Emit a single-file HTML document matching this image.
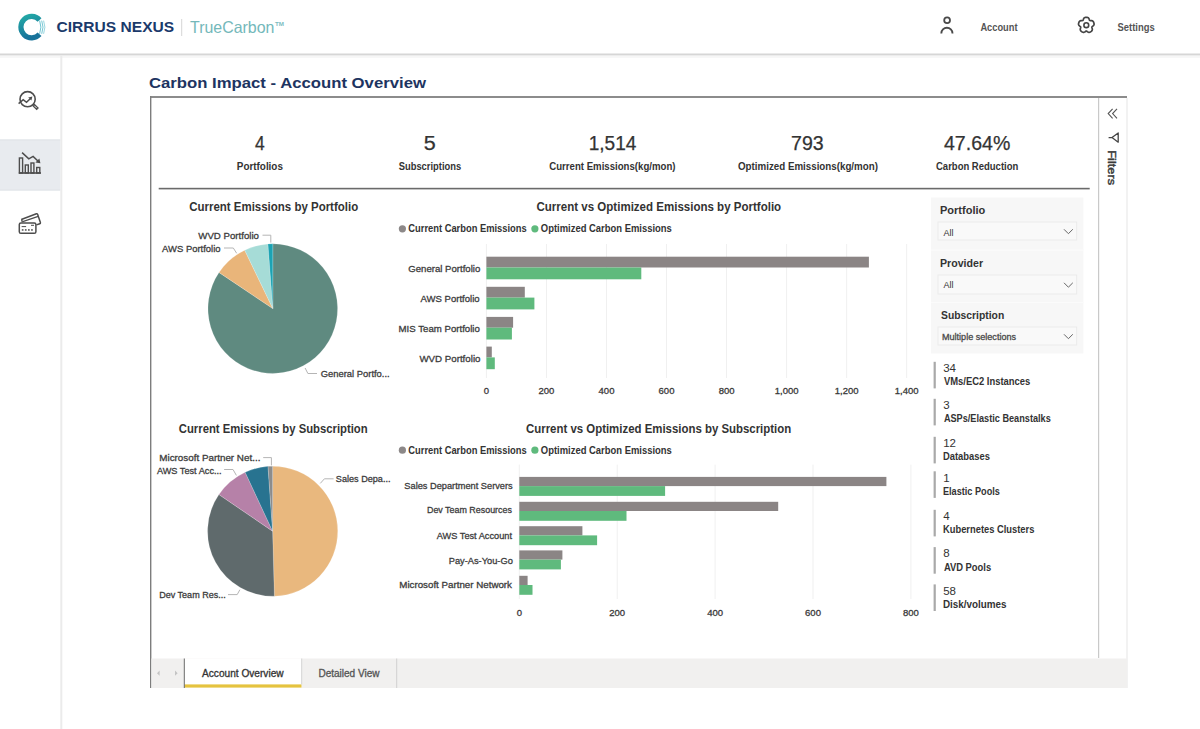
<!DOCTYPE html>
<html><head><meta charset="utf-8"><title>Carbon Impact - Account Overview</title>
<style>html,body{margin:0;padding:0;background:#fff;overflow:hidden} svg{display:block} text{font-family:"Liberation Sans", sans-serif}</style>
</head><body>
<svg width="1200" height="729" viewBox="0 0 1200 729">
<rect x="0" y="0" width="1200" height="54" fill="#ffffff"/>
<rect x="0" y="53.5" width="1200" height="1.5" fill="#d6d6d6"/>
<rect x="0" y="55" width="1200" height="1.5" fill="#ececec"/>
<rect x="0" y="56.5" width="1200" height="1.5" fill="#f7f7f7"/>
<defs><linearGradient id="lg" x1="0" y1="0" x2="0.3" y2="1"><stop offset="0" stop-color="#23a9a6"/><stop offset="1" stop-color="#17739a"/></linearGradient></defs>
<path d="M39.55 34.26 A10.7 10.7 0 1 1 39.55 19.94" fill="none" stroke="url(#lg)" stroke-width="5.2"/>
<path d="M39.6 20.6 Q42.2 27.2 39.6 33.8" fill="none" stroke="#3fb0c2" stroke-opacity="0.85" stroke-width="0.9"/>
<path d="M41.7 20.6 Q44.3 27.2 41.7 33.8" fill="none" stroke="#3fb0c2" stroke-opacity="0.8" stroke-width="0.9"/>
<path d="M43.6 20.6 Q46.2 27.2 43.6 33.8" fill="none" stroke="#3fb0c2" stroke-opacity="0.6" stroke-width="0.9"/>
<rect x="181.2" y="19" width="1" height="17" fill="#d5d5d5"/>
<text x="275" y="25.5" font-family="Liberation Sans" font-size="6" font-weight="700" fill="#7bbcbf" textLength="9" lengthAdjust="spacingAndGlyphs">TM</text>
<circle cx="947.1" cy="20.2" r="2.9" fill="none" stroke="#4a4a4a" stroke-width="1.8"/>
<path d="M941.3 33.4 A5.6 5.6 0 0 1 952.5 33.4" fill="none" stroke="#4a4a4a" stroke-width="1.9"/>
<path d="M1093.76 25.20 L1093.35 25.69 L1092.84 26.12 L1092.35 26.49 L1092.00 26.84 L1091.88 27.23 L1091.95 27.71 L1092.13 28.30 L1092.29 28.95 L1092.34 29.59 L1092.22 30.17 L1091.95 30.66 L1091.58 31.07 L1091.16 31.43 L1090.72 31.75 L1090.25 32.04 L1089.74 32.26 L1089.19 32.36 L1088.61 32.30 L1088.01 32.06 L1087.45 31.70 L1086.95 31.35 L1086.51 31.13 L1086.09 31.13 L1085.65 31.35 L1085.15 31.70 L1084.59 32.06 L1083.99 32.30 L1083.41 32.36 L1082.86 32.26 L1082.35 32.04 L1081.88 31.75 L1081.44 31.43 L1081.02 31.07 L1080.65 30.66 L1080.38 30.17 L1080.26 29.59 L1080.31 28.95 L1080.47 28.30 L1080.65 27.71 L1080.72 27.23 L1080.60 26.84 L1080.25 26.49 L1079.76 26.12 L1079.25 25.69 L1078.84 25.20 L1078.59 24.66 L1078.52 24.11 L1078.58 23.56 L1078.71 23.02 L1078.88 22.50 L1079.09 21.99 L1079.36 21.51 L1079.75 21.11 L1080.26 20.81 L1080.89 20.66 L1081.55 20.61 L1082.16 20.61 L1082.65 20.52 L1082.98 20.28 L1083.21 19.85 L1083.41 19.27 L1083.65 18.65 L1083.99 18.10 L1084.43 17.70 L1084.94 17.46 L1085.47 17.35 L1086.02 17.30 L1086.58 17.30 L1087.13 17.35 L1087.66 17.46 L1088.17 17.70 L1088.61 18.10 L1088.95 18.65 L1089.19 19.27 L1089.39 19.85 L1089.62 20.28 L1089.95 20.52 L1090.44 20.61 L1091.05 20.61 L1091.71 20.66 L1092.34 20.81 L1092.85 21.11 L1093.24 21.51 L1093.51 21.99 L1093.72 22.50 L1093.89 23.02 L1094.02 23.56 L1094.08 24.11 L1094.01 24.66 L1093.76 25.20Z" fill="none" stroke="#444" stroke-width="1.7" stroke-linejoin="round"/>
<circle cx="1086.3" cy="25.2" r="2.4" fill="none" stroke="#444" stroke-width="1.6"/>
<rect x="60.3" y="55" width="2" height="674" fill="#ebebeb"/>
<rect x="0" y="139.5" width="60.3" height="51" fill="#e8ebef"/>
<rect x="0" y="139.5" width="60.3" height="1" fill="#e0e3e7"/>
<rect x="0" y="189.5" width="60.3" height="1" fill="#e0e3e7"/>
<circle cx="27.6" cy="99.2" r="7.6" fill="none" stroke="#4d4d4d" stroke-width="1.6"/>
<path d="M33.2 104.6 L37.8 109.2" stroke="#4d4d4d" stroke-width="3.2" stroke-linecap="butt"/>
<path d="M34.3 105.7 L36.7 108.1" stroke="#fff" stroke-width="0.9"/>
<path d="M18.6 103.6 L23.2 99.7 L26.5 102.3 L30.2 98.8" fill="none" stroke="#4d4d4d" stroke-width="1.5"/>
<path d="M28.2 97.4 L32.4 96.4 L31.4 100.6 Z" fill="#4d4d4d"/>
<path d="M18.8 173 L41 173" stroke="#4d4d4d" stroke-width="1.6"/>
<rect x="19.4" y="158" width="3.200000000000003" height="15" fill="none" stroke="#4d4d4d" stroke-width="1.4"/>
<rect x="25.3" y="165" width="3.0" height="8" fill="none" stroke="#4d4d4d" stroke-width="1.4"/>
<rect x="31" y="163" width="2.8999999999999986" height="10" fill="none" stroke="#4d4d4d" stroke-width="1.4"/>
<rect x="36.7" y="167.5" width="3.0999999999999943" height="5.5" fill="none" stroke="#4d4d4d" stroke-width="1.4"/>
<path d="M22.1 152.6 L28.8 158.8 L33.1 156.4 L38.2 161.2" fill="none" stroke="#4d4d4d" stroke-width="1.5"/>
<path d="M35.4 162.4 L40.4 163.2 L39.4 158.4 Z" fill="#4d4d4d"/>
<path d="M21.3 219.5 L36.4 213.8 Q37.2 213.5 37.6 214.3 L40.4 222.6 Q40.6 223.4 39.8 223.7 L36.4 224.9" fill="none" stroke="#4d4d4d" stroke-width="1.5" stroke-linejoin="round"/>
<path d="M21.6 219.4 L22.4 222.4" stroke="#4d4d4d" stroke-width="1.4"/>
<path d="M22.8 221.6 L38.2 216.4" stroke="#4d4d4d" stroke-width="1.2"/>
<rect x="19.3" y="222.9" width="16.6" height="10.4" rx="1.6" fill="#fff" stroke="#4d4d4d" stroke-width="1.5"/>
<rect x="21.6" y="226.1" width="4.5" height="1" fill="#4d4d4d"/>
<rect x="31" y="224.8" width="3" height="1" fill="#4d4d4d"/>
<rect x="21.8" y="229.2" width="1.7" height="1.5" fill="#4d4d4d"/>
<rect x="24.9" y="229.2" width="1.7" height="1.5" fill="#4d4d4d"/>
<rect x="28" y="229.2" width="1.7" height="1.5" fill="#4d4d4d"/>
<rect x="31.1" y="229.2" width="1.7" height="1.5" fill="#4d4d4d"/>
<rect x="150" y="96" width="977" height="592" fill="#ffffff"/>
<rect x="150" y="96" width="977" height="2" fill="#8c8c8c"/>
<rect x="150" y="96" width="1.4" height="592" fill="#7d7d7d"/>
<rect x="1126.5" y="98" width="1" height="590" fill="#e6e6e6"/>
<rect x="1098" y="98" width="1.2" height="560" fill="#c9c9c9"/>
<path d="M1112.6 108.8 L1108.2 113.6 L1112.6 118.4 M1117 108.8 L1112.6 113.6 L1117 118.4" fill="none" stroke="#555" stroke-width="1.1"/>
<path d="M1118.2 133 L1118.2 142.2 L1112 137.6 Z M1112 137.6 L1108.6 137.6" fill="none" stroke="#444" stroke-width="1.3" stroke-linejoin="round"/>
<text transform="translate(1108.4 150.2) rotate(90)" x="0" y="0" font-family="Liberation Sans" font-size="11.5" font-weight="400" fill="#3a3a3a" stroke="#3a3a3a" stroke-width="0.45" textLength="35" lengthAdjust="spacingAndGlyphs">Filters</text>
<rect x="158.7" y="187.8" width="931" height="1.6" fill="#6a6a6a"/>
<path d="M272.8 308.6 L272.80 243.80 A64.8 64.8 0 1 1 219.00 272.47 Z" fill="#5f8a80" stroke="#ffffff" stroke-width="0.5" stroke-opacity="0.35"/><path d="M272.8 308.6 L219.00 272.47 A64.8 64.8 0 0 1 244.72 250.20 Z" fill="#e9b57a" stroke="#ffffff" stroke-width="0.5" stroke-opacity="0.35"/><path d="M272.8 308.6 L244.72 250.20 A64.8 64.8 0 0 1 267.96 243.98 Z" fill="#a6dcd7" stroke="#ffffff" stroke-width="0.5" stroke-opacity="0.35"/><path d="M272.8 308.6 L267.96 243.98 A64.8 64.8 0 0 1 272.80 243.80 Z" fill="#1ba3b3" stroke="#ffffff" stroke-width="0.5" stroke-opacity="0.35"/>
<path d="M262.5 235.2 L270.8 235.2 L270.8 242.6" fill="none" stroke="#b5b5b5" stroke-width="1"/>
<path d="M224 248 L233.3 248 L236.7 253.3" fill="none" stroke="#b5b5b5" stroke-width="1"/>
<path d="M305.1 368 L307.9 373.5 L317 373.5" fill="none" stroke="#b5b5b5" stroke-width="1"/>
<path d="M272.6 531.2 L272.60 466.20 A65 65 0 0 1 274.35 596.18 Z" fill="#e9b87e" stroke="#ffffff" stroke-width="0.5" stroke-opacity="0.35"/><path d="M272.6 531.2 L274.35 596.18 A65 65 0 0 1 218.92 494.55 Z" fill="#5f6a6c" stroke="#ffffff" stroke-width="0.5" stroke-opacity="0.35"/><path d="M272.6 531.2 L218.92 494.55 A65 65 0 0 1 245.15 472.28 Z" fill="#b681a8" stroke="#ffffff" stroke-width="0.5" stroke-opacity="0.35"/><path d="M272.6 531.2 L245.15 472.28 A65 65 0 0 1 268.01 466.36 Z" fill="#287390" stroke="#ffffff" stroke-width="0.5" stroke-opacity="0.35"/><path d="M272.6 531.2 L268.01 466.36 A65 65 0 0 1 272.60 466.20 Z" fill="#8c8c8c" stroke="#ffffff" stroke-width="0.5" stroke-opacity="0.35"/>
<path d="M263.2 457.6 L271.4 457.6 L271.4 465.4" fill="none" stroke="#b5b5b5" stroke-width="1"/>
<path d="M224.1 469.5 L233 469.5 L236.4 475.4" fill="none" stroke="#b5b5b5" stroke-width="1"/>
<path d="M320.3 483.4 L324.4 478.8 L333.6 478.8" fill="none" stroke="#b5b5b5" stroke-width="1"/>
<path d="M228 594.6 L237.2 594.6 L239.9 589.7" fill="none" stroke="#b5b5b5" stroke-width="1"/>
<rect x="485.90" y="244" width="1" height="134" fill="#f0f0f0"/>
<rect x="545.94" y="244" width="1" height="134" fill="#f0f0f0"/>
<rect x="605.98" y="244" width="1" height="134" fill="#f0f0f0"/>
<rect x="666.02" y="244" width="1" height="134" fill="#f0f0f0"/>
<rect x="726.06" y="244" width="1" height="134" fill="#f0f0f0"/>
<rect x="786.10" y="244" width="1" height="134" fill="#f0f0f0"/>
<rect x="846.14" y="244" width="1" height="134" fill="#f0f0f0"/>
<rect x="906.18" y="244" width="1" height="134" fill="#f0f0f0"/>
<rect x="486.4" y="256.7" width="382.5" height="10.8" fill="#8b8585"/>
<rect x="486.4" y="267.5" width="154.9" height="11.8" fill="#5fba7d"/>
<rect x="486.4" y="286.8" width="38.4" height="10.8" fill="#8b8585"/>
<rect x="486.4" y="297.6" width="48.0" height="11.8" fill="#5fba7d"/>
<rect x="486.4" y="316.9" width="26.7" height="10.8" fill="#8b8585"/>
<rect x="486.4" y="327.7" width="25.5" height="11.8" fill="#5fba7d"/>
<rect x="486.4" y="346.6" width="5.4" height="10.8" fill="#8b8585"/>
<rect x="486.4" y="357.4" width="8.4" height="11.8" fill="#5fba7d"/>
<text x="486.4" y="393.5" text-anchor="middle" font-family="Liberation Sans" font-size="9.5" fill="#3a3a3a" stroke="#3a3a3a" stroke-width="0.3">0</text>
<text x="546.4" y="393.5" text-anchor="middle" font-family="Liberation Sans" font-size="9.5" fill="#3a3a3a" stroke="#3a3a3a" stroke-width="0.3">200</text>
<text x="606.5" y="393.5" text-anchor="middle" font-family="Liberation Sans" font-size="9.5" fill="#3a3a3a" stroke="#3a3a3a" stroke-width="0.3">400</text>
<text x="666.5" y="393.5" text-anchor="middle" font-family="Liberation Sans" font-size="9.5" fill="#3a3a3a" stroke="#3a3a3a" stroke-width="0.3">600</text>
<text x="726.6" y="393.5" text-anchor="middle" font-family="Liberation Sans" font-size="9.5" fill="#3a3a3a" stroke="#3a3a3a" stroke-width="0.3">800</text>
<text x="786.6" y="393.5" text-anchor="middle" font-family="Liberation Sans" font-size="9.5" fill="#3a3a3a" stroke="#3a3a3a" stroke-width="0.3">1,000</text>
<text x="846.6" y="393.5" text-anchor="middle" font-family="Liberation Sans" font-size="9.5" fill="#3a3a3a" stroke="#3a3a3a" stroke-width="0.3">1,200</text>
<text x="906.7" y="393.5" text-anchor="middle" font-family="Liberation Sans" font-size="9.5" fill="#3a3a3a" stroke="#3a3a3a" stroke-width="0.3">1,400</text>
<circle cx="402.4" cy="228.8" r="3.6" fill="#8c8888"/>
<circle cx="534.9" cy="228.8" r="3.6" fill="#5fba7d"/>
<circle cx="402.4" cy="450.2" r="3.6" fill="#8c8888"/>
<circle cx="534.9" cy="450.2" r="3.6" fill="#5fba7d"/>
<rect x="518.80" y="464.6" width="1" height="134.4" fill="#f0f0f0"/>
<rect x="616.70" y="464.6" width="1" height="134.4" fill="#f0f0f0"/>
<rect x="714.60" y="464.6" width="1" height="134.4" fill="#f0f0f0"/>
<rect x="812.50" y="464.6" width="1" height="134.4" fill="#f0f0f0"/>
<rect x="910.40" y="464.6" width="1" height="134.4" fill="#f0f0f0"/>
<rect x="519.3" y="476.9" width="367.1" height="9.2" fill="#8b8585"/>
<rect x="519.3" y="486.1" width="145.8" height="9.8" fill="#5fba7d"/>
<rect x="519.3" y="501.8" width="258.9" height="9.2" fill="#8b8585"/>
<rect x="519.3" y="511.0" width="107.2" height="9.8" fill="#5fba7d"/>
<rect x="519.3" y="526.2" width="63.1" height="9.2" fill="#8b8585"/>
<rect x="519.3" y="535.4" width="77.8" height="9.8" fill="#5fba7d"/>
<rect x="519.3" y="550.4" width="43.1" height="9.2" fill="#8b8585"/>
<rect x="519.3" y="559.6" width="41.6" height="9.8" fill="#5fba7d"/>
<rect x="519.3" y="575.8" width="8.3" height="9.2" fill="#8b8585"/>
<rect x="519.3" y="585.0" width="13.2" height="9.8" fill="#5fba7d"/>
<text x="519.3" y="615.6" text-anchor="middle" font-family="Liberation Sans" font-size="9.5" fill="#3a3a3a" stroke="#3a3a3a" stroke-width="0.3">0</text>
<text x="617.2" y="615.6" text-anchor="middle" font-family="Liberation Sans" font-size="9.5" fill="#3a3a3a" stroke="#3a3a3a" stroke-width="0.3">200</text>
<text x="715.1" y="615.6" text-anchor="middle" font-family="Liberation Sans" font-size="9.5" fill="#3a3a3a" stroke="#3a3a3a" stroke-width="0.3">400</text>
<text x="813.0" y="615.6" text-anchor="middle" font-family="Liberation Sans" font-size="9.5" fill="#3a3a3a" stroke="#3a3a3a" stroke-width="0.3">600</text>
<text x="910.9" y="615.6" text-anchor="middle" font-family="Liberation Sans" font-size="9.5" fill="#3a3a3a" stroke="#3a3a3a" stroke-width="0.3">800</text>
<rect x="931" y="197.5" width="152.4" height="156" fill="#f7f7f7"/>
<rect x="931" y="249.5" width="152.4" height="1.2" fill="#fbfbfb"/>
<rect x="931" y="301.8" width="152.4" height="1.2" fill="#fbfbfb"/>
<rect x="938" y="222" width="138.6" height="18" fill="#f9f9f9" stroke="#ebebeb" stroke-width="1"/>
<path d="M1064 229.3 L1068.4 233.7 L1072.8 229.3" fill="none" stroke="#666" stroke-width="1"/>
<rect x="938" y="275" width="138.6" height="19" fill="#f9f9f9" stroke="#ebebeb" stroke-width="1"/>
<path d="M1064 282.8 L1068.4 287.2 L1072.8 282.8" fill="none" stroke="#666" stroke-width="1"/>
<rect x="938" y="327" width="138.6" height="18" fill="#f9f9f9" stroke="#ebebeb" stroke-width="1"/>
<path d="M1064 334.3 L1068.4 338.7 L1072.8 334.3" fill="none" stroke="#666" stroke-width="1"/>
<text x="943.4" y="235.7" font-family="Liberation Sans" font-size="9" fill="#333">All</text>
<text x="943.4" y="288.3" font-family="Liberation Sans" font-size="9" fill="#333">All</text>
<rect x="933.6" y="361.8" width="2.2" height="26.6" fill="#a9a9a9"/>
<text x="943.2" y="372" font-family="Liberation Sans" font-size="11.5" fill="#333">34</text>
<rect x="933.6" y="398.8" width="2.2" height="26.6" fill="#a9a9a9"/>
<text x="943.2" y="409" font-family="Liberation Sans" font-size="11.5" fill="#333">3</text>
<rect x="933.6" y="436.8" width="2.2" height="26.6" fill="#a9a9a9"/>
<text x="943.2" y="447" font-family="Liberation Sans" font-size="11.5" fill="#333">12</text>
<rect x="933.6" y="471.3" width="2.2" height="26.6" fill="#a9a9a9"/>
<text x="943.2" y="481.5" font-family="Liberation Sans" font-size="11.5" fill="#333">1</text>
<rect x="933.6" y="509.8" width="2.2" height="26.6" fill="#a9a9a9"/>
<text x="943.2" y="520" font-family="Liberation Sans" font-size="11.5" fill="#333">4</text>
<rect x="933.6" y="547.1" width="2.2" height="26.6" fill="#a9a9a9"/>
<text x="943.2" y="557.3" font-family="Liberation Sans" font-size="11.5" fill="#333">8</text>
<rect x="933.6" y="584.4" width="2.2" height="26.6" fill="#a9a9a9"/>
<text x="943.2" y="594.6" font-family="Liberation Sans" font-size="11.5" fill="#333">58</text>
<rect x="151.4" y="658.5" width="975.6" height="29.5" fill="#f1f0ef"/>
<rect x="184.3" y="658.5" width="117.2" height="29.5" fill="#ffffff"/>
<rect x="184.3" y="684.4" width="117.2" height="3.2" fill="#e5c33f"/>
<rect x="183.8" y="658.5" width="1" height="29.5" fill="#6a6a6a"/>
<rect x="301.2" y="658.5" width="1" height="26" fill="#d4d4d4"/>
<rect x="396.2" y="658.5" width="1" height="29.5" fill="#d0d0d0"/>
<path d="M159.6 670.6 L157 673.2 L159.6 675.8 Z" fill="#c4c4c4"/>
<path d="M175 670.6 L177.6 673.2 L175 675.8 Z" fill="#c4c4c4"/>
<text x="56.50" y="32.2" font-family="Liberation Sans" font-size="15.5" font-weight="700" fill="#1b3a6b" textLength="117.65" lengthAdjust="spacingAndGlyphs">CIRRUS NEXUS</text>
<text x="190.00" y="32.5" font-family="Liberation Sans" font-size="16.5" font-weight="400" fill="#74b8ba" textLength="84.42" lengthAdjust="spacingAndGlyphs">TrueCarbon</text>
<text x="980.40" y="30.7" font-family="Liberation Sans" font-size="10" font-weight="700" fill="#555555" textLength="37.10" lengthAdjust="spacingAndGlyphs">Account</text>
<text x="1117.50" y="30.7" font-family="Liberation Sans" font-size="10" font-weight="700" fill="#555555" textLength="37.13" lengthAdjust="spacingAndGlyphs">Settings</text>
<text x="148.92" y="88" font-family="Liberation Sans" font-size="15.5" font-weight="700" fill="#1d3461" textLength="277.04" lengthAdjust="spacingAndGlyphs">Carbon Impact - Account Overview</text>
<text x="254.90" y="149.8" font-family="Liberation Sans" font-size="20" font-weight="400" fill="#333333" stroke="#333333" stroke-width="0.25" textLength="9.71" lengthAdjust="spacingAndGlyphs">4</text>
<text x="236.80" y="169.8" font-family="Liberation Sans" font-size="11" font-weight="700" fill="#333333" textLength="46.11" lengthAdjust="spacingAndGlyphs">Portfolios</text>
<text x="423.72" y="150.0" font-family="Liberation Sans" font-size="20" font-weight="400" fill="#333333" stroke="#333333" stroke-width="0.25" textLength="11.99" lengthAdjust="spacingAndGlyphs">5</text>
<text x="398.70" y="170" font-family="Liberation Sans" font-size="11" font-weight="700" fill="#333333" textLength="62.49" lengthAdjust="spacingAndGlyphs">Subscriptions</text>
<text x="588.65" y="149.8" font-family="Liberation Sans" font-size="20" font-weight="400" fill="#333333" stroke="#333333" stroke-width="0.25" textLength="47.71" lengthAdjust="spacingAndGlyphs">1,514</text>
<text x="549.20" y="169.8" font-family="Liberation Sans" font-size="11" font-weight="700" fill="#333333" textLength="126.32" lengthAdjust="spacingAndGlyphs">Current Emissions(kg/mon)</text>
<text x="791.02" y="149.6" font-family="Liberation Sans" font-size="20" font-weight="400" fill="#333333" stroke="#333333" stroke-width="0.25" textLength="32.64" lengthAdjust="spacingAndGlyphs">793</text>
<text x="738.00" y="169.8" font-family="Liberation Sans" font-size="11" font-weight="700" fill="#333333" textLength="139.91" lengthAdjust="spacingAndGlyphs">Optimized Emissions(kg/mon)</text>
<text x="944.00" y="150.2" font-family="Liberation Sans" font-size="20" font-weight="400" fill="#333333" stroke="#333333" stroke-width="0.25" textLength="66.32" lengthAdjust="spacingAndGlyphs">47.64%</text>
<text x="936.00" y="170" font-family="Liberation Sans" font-size="11" font-weight="700" fill="#333333" textLength="82.30" lengthAdjust="spacingAndGlyphs">Carbon Reduction</text>
<text x="189.20" y="210.8" font-family="Liberation Sans" font-size="12" font-weight="700" fill="#333333" textLength="168.97" lengthAdjust="spacingAndGlyphs">Current Emissions by Portfolio</text>
<text x="536.50" y="210.7" font-family="Liberation Sans" font-size="12" font-weight="700" fill="#333333" textLength="244.63" lengthAdjust="spacingAndGlyphs">Current vs Optimized Emissions by Portfolio</text>
<text x="178.80" y="432.5" font-family="Liberation Sans" font-size="12" font-weight="700" fill="#333333" textLength="188.86" lengthAdjust="spacingAndGlyphs">Current Emissions by Subscription</text>
<text x="526.00" y="432.5" font-family="Liberation Sans" font-size="12" font-weight="700" fill="#333333" textLength="265.18" lengthAdjust="spacingAndGlyphs">Current vs Optimized Emissions by Subscription</text>
<text x="408.30" y="232.4" font-family="Liberation Sans" font-size="10.5" font-weight="700" fill="#333333" textLength="118.43" lengthAdjust="spacingAndGlyphs">Current Carbon Emissions</text>
<text x="540.80" y="232.4" font-family="Liberation Sans" font-size="10.5" font-weight="700" fill="#333333" textLength="131.07" lengthAdjust="spacingAndGlyphs">Optimized Carbon Emissions</text>
<text x="408.30" y="453.8" font-family="Liberation Sans" font-size="10.5" font-weight="700" fill="#333333" textLength="118.43" lengthAdjust="spacingAndGlyphs">Current Carbon Emissions</text>
<text x="540.80" y="453.8" font-family="Liberation Sans" font-size="10.5" font-weight="700" fill="#333333" textLength="131.07" lengthAdjust="spacingAndGlyphs">Optimized Carbon Emissions</text>
<text x="198.30" y="238.7" font-family="Liberation Sans" font-size="9.5" font-weight="400" fill="#3c3c3c" stroke="#3c3c3c" stroke-width="0.3" textLength="60.67" lengthAdjust="spacingAndGlyphs">WVD Portfolio</text>
<text x="162.10" y="251.7" font-family="Liberation Sans" font-size="9.5" font-weight="400" fill="#3c3c3c" stroke="#3c3c3c" stroke-width="0.3" textLength="58.48" lengthAdjust="spacingAndGlyphs">AWS Portfolio</text>
<text x="320.70" y="376.7" font-family="Liberation Sans" font-size="9.5" font-weight="400" fill="#3c3c3c" stroke="#3c3c3c" stroke-width="0.3" textLength="69.00" lengthAdjust="spacingAndGlyphs">General Portfo...</text>
<text x="159.26" y="461.3" font-family="Liberation Sans" font-size="9.5" font-weight="400" fill="#3c3c3c" stroke="#3c3c3c" stroke-width="0.3" textLength="101.13" lengthAdjust="spacingAndGlyphs">Microsoft Partner Net...</text>
<text x="156.90" y="473.6" font-family="Liberation Sans" font-size="9.5" font-weight="400" fill="#3c3c3c" stroke="#3c3c3c" stroke-width="0.3" textLength="64.73" lengthAdjust="spacingAndGlyphs">AWS Test Acc...</text>
<text x="335.84" y="482" font-family="Liberation Sans" font-size="9.5" font-weight="400" fill="#3c3c3c" stroke="#3c3c3c" stroke-width="0.3" textLength="54.66" lengthAdjust="spacingAndGlyphs">Sales Depa...</text>
<text x="159.15" y="598" font-family="Liberation Sans" font-size="9.5" font-weight="400" fill="#3c3c3c" stroke="#3c3c3c" stroke-width="0.3" textLength="66.65" lengthAdjust="spacingAndGlyphs">Dev Team Res...</text>
<text x="408.30" y="271.6" font-family="Liberation Sans" font-size="9.5" font-weight="400" fill="#3c3c3c" stroke="#3c3c3c" stroke-width="0.3" textLength="72.00" lengthAdjust="spacingAndGlyphs">General Portfolio</text>
<text x="420.50" y="301.7" font-family="Liberation Sans" font-size="9.5" font-weight="400" fill="#3c3c3c" stroke="#3c3c3c" stroke-width="0.3" textLength="59.08" lengthAdjust="spacingAndGlyphs">AWS Portfolio</text>
<text x="398.58" y="331.8" font-family="Liberation Sans" font-size="9.5" font-weight="400" fill="#3c3c3c" stroke="#3c3c3c" stroke-width="0.3" textLength="81.29" lengthAdjust="spacingAndGlyphs">MIS Team Portfolio</text>
<text x="419.40" y="361.6" font-family="Liberation Sans" font-size="9.5" font-weight="400" fill="#3c3c3c" stroke="#3c3c3c" stroke-width="0.3" textLength="61.07" lengthAdjust="spacingAndGlyphs">WVD Portfolio</text>
<text x="404.33" y="489.4" font-family="Liberation Sans" font-size="9.5" font-weight="400" fill="#3c3c3c" stroke="#3c3c3c" stroke-width="0.3" textLength="108.38" lengthAdjust="spacingAndGlyphs">Sales Department Servers</text>
<text x="426.96" y="513.3" font-family="Liberation Sans" font-size="9.5" font-weight="400" fill="#3c3c3c" stroke="#3c3c3c" stroke-width="0.3" textLength="85.00" lengthAdjust="spacingAndGlyphs">Dev Team Resources</text>
<text x="436.80" y="539" font-family="Liberation Sans" font-size="9.5" font-weight="400" fill="#3c3c3c" stroke="#3c3c3c" stroke-width="0.3" textLength="75.14" lengthAdjust="spacingAndGlyphs">AWS Test Account</text>
<text x="448.72" y="563.5" font-family="Liberation Sans" font-size="9.5" font-weight="400" fill="#3c3c3c" stroke="#3c3c3c" stroke-width="0.3" textLength="64.12" lengthAdjust="spacingAndGlyphs">Pay-As-You-Go</text>
<text x="399.27" y="588.3" font-family="Liberation Sans" font-size="9.5" font-weight="400" fill="#3c3c3c" stroke="#3c3c3c" stroke-width="0.3" textLength="112.73" lengthAdjust="spacingAndGlyphs">Microsoft Partner Network</text>
<text x="940.00" y="214" font-family="Liberation Sans" font-size="11" font-weight="700" fill="#333333" textLength="45.22" lengthAdjust="spacingAndGlyphs">Portfolio</text>
<text x="940.04" y="266.8" font-family="Liberation Sans" font-size="11" font-weight="700" fill="#333333" textLength="43.02" lengthAdjust="spacingAndGlyphs">Provider</text>
<text x="941.00" y="318.6" font-family="Liberation Sans" font-size="11" font-weight="700" fill="#333333" textLength="63.22" lengthAdjust="spacingAndGlyphs">Subscription</text>
<text x="941.99" y="340" font-family="Liberation Sans" font-size="9" font-weight="400" fill="#4a4a4a" stroke="#4a4a4a" stroke-width="0.3" textLength="74.06" lengthAdjust="spacingAndGlyphs">Multiple selections</text>
<text x="943.90" y="385.2" font-family="Liberation Sans" font-size="10" font-weight="700" fill="#333333" textLength="86.43" lengthAdjust="spacingAndGlyphs">VMs/EC2 Instances</text>
<text x="943.90" y="421.6" font-family="Liberation Sans" font-size="10" font-weight="700" fill="#333333" textLength="106.86" lengthAdjust="spacingAndGlyphs">ASPs/Elastic Beanstalks</text>
<text x="942.96" y="460" font-family="Liberation Sans" font-size="10" font-weight="700" fill="#333333" textLength="46.97" lengthAdjust="spacingAndGlyphs">Databases</text>
<text x="942.99" y="494.8" font-family="Liberation Sans" font-size="10" font-weight="700" fill="#333333" textLength="56.84" lengthAdjust="spacingAndGlyphs">Elastic Pools</text>
<text x="942.96" y="533" font-family="Liberation Sans" font-size="10" font-weight="700" fill="#333333" textLength="91.46" lengthAdjust="spacingAndGlyphs">Kubernetes Clusters</text>
<text x="943.90" y="570.8" font-family="Liberation Sans" font-size="10" font-weight="700" fill="#333333" textLength="47.27" lengthAdjust="spacingAndGlyphs">AVD Pools</text>
<text x="942.91" y="608" font-family="Liberation Sans" font-size="10" font-weight="700" fill="#333333" textLength="63.67" lengthAdjust="spacingAndGlyphs">Disk/volumes</text>
<text x="202.00" y="677" font-family="Liberation Sans" font-size="10" font-weight="400" fill="#333333" stroke="#333333" stroke-width="0.3" textLength="81.59" lengthAdjust="spacingAndGlyphs">Account Overview</text>
<text x="318.40" y="677" font-family="Liberation Sans" font-size="10" font-weight="400" fill="#555555" stroke="#555555" stroke-width="0.3" textLength="61.17" lengthAdjust="spacingAndGlyphs">Detailed View</text>
</svg>
</body></html>
